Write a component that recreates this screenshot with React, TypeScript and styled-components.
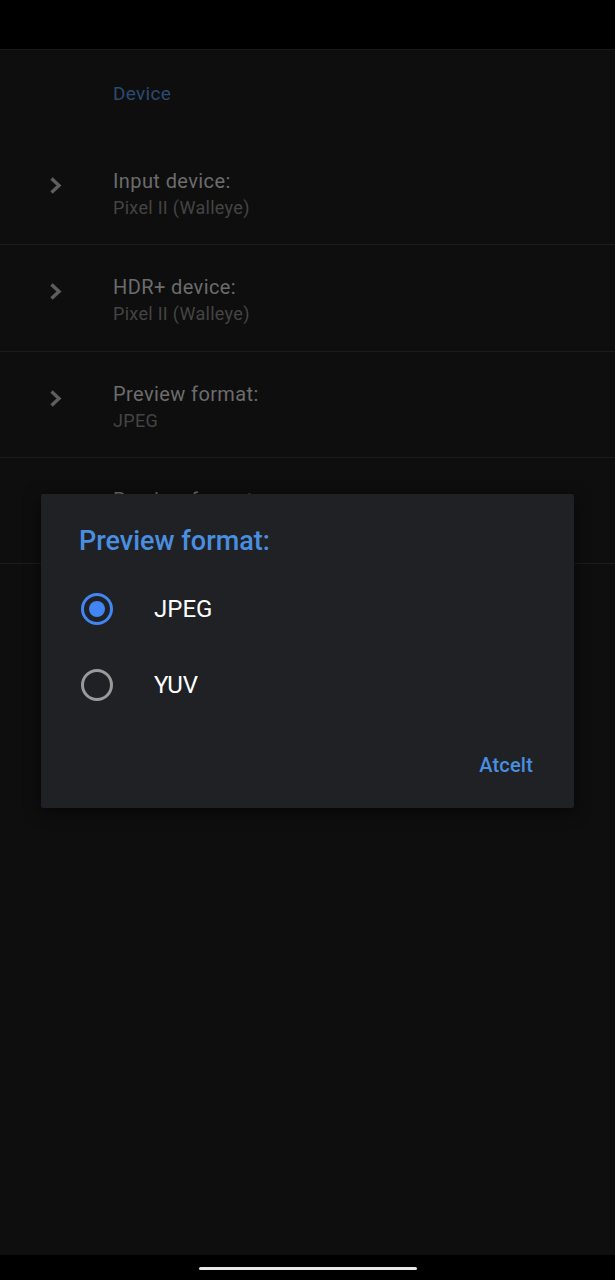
import React from "react";
import styled, { createGlobalStyle } from "styled-components";

const Global = createGlobalStyle`
  html, body { margin: 0; padding: 0; background: #0e0e0e; }
  body { font-family: Roboto, "Noto Sans", Arial, sans-serif; }
`;

const Screen = styled.div`
  position: relative;
  width: 615px;
  height: 1280px;
  background: #0e0e0e;
  display: flex;
  flex-direction: column;
  overflow: hidden;
`;

const StatusBar = styled.div`
  height: 49px;
  background: #000;
  border-bottom: 1px solid #1a1a1a;
  flex-shrink: 0;
`;

const Content = styled.div`
  flex: 1;
  display: flex;
  flex-direction: column;
`;

const SectionHeader = styled.div`
  height: 89px;
  box-sizing: border-box;
  padding: 33px 0 0 113px;
  color: #2b4a72;
  font-size: 19px;
  line-height: 22px;
  letter-spacing: 0.3px;
`;

const Row = styled.div<{ $tall?: boolean }>`
  height: ${(p) => (p.$tall ? 107 : 106)}px;
  box-sizing: border-box;
  border-bottom: 1px solid #1c1c1c;
  display: flex;
  align-items: flex-start;
  padding-top: 30px;
`;

const ChevronCell = styled.div`
  width: 113px;
  display: flex;
  padding-left: 49px;
  box-sizing: border-box;
  margin-top: 7px;
`;

const TextCol = styled.div`
  display: flex;
  flex-direction: column;
  gap: 4px;
`;

const RowTitle = styled.div`
  color: #6c6c6c;
  font-size: 20px;
  line-height: 24px;
  letter-spacing: 0.4px;
`;

const RowSub = styled.div`
  color: #444;
  font-size: 18px;
  line-height: 22px;
  letter-spacing: 0.3px;
`;

const NavBar = styled.div`
  height: 25px;
  background: #000;
  display: flex;
  justify-content: center;
  padding-top: 12px;
  box-sizing: border-box;
  flex-shrink: 0;
`;

const Pill = styled.div`
  width: 218px;
  height: 3px;
  border-radius: 2px;
  background: #e8e8e8;
`;

const Dialog = styled.div`
  position: absolute;
  left: 41px;
  top: 494px;
  width: 533px;
  height: 314px;
  background: #202124;
  border-radius: 2px;
  box-shadow: 0 4px 16px rgba(0, 0, 0, 0.6);
  box-sizing: border-box;
  padding: 29px 0 0 38px;
  display: flex;
  flex-direction: column;
`;

const DialogTitle = styled.div`
  color: #4a8ee0;
  font-size: 27px;
  font-weight: 500;
  line-height: 36px;
  margin-bottom: 12px;
`;

const Option = styled.div`
  height: 76px;
  display: flex;
  align-items: center;
  gap: 41px;
`;

const Radio = styled.div<{ $on?: boolean }>`
  width: 32px;
  height: 32px;
  border-radius: 50%;
  box-sizing: border-box;
  border: 3px solid ${(p) => (p.$on ? "#4285f4" : "#9a9a9a")};
  display: flex;
  align-items: center;
  justify-content: center;
  margin-left: 2px;
`;

const Dot = styled.div`
  width: 16px;
  height: 16px;
  border-radius: 50%;
  background: #4285f4;
`;

const OptionLabel = styled.div`
  color: #ffffff;
  font-size: 24px;
`;

const Actions = styled.div`
  display: flex;
  justify-content: flex-end;
  padding-right: 41px;
  margin-top: 30px;
`;

const ActionButton = styled.div`
  color: #4a8ee0;
  font-size: 20px;
  font-weight: 500;
  letter-spacing: 0.2px;
`;

const Chevron = () => (
  <svg width="15" height="19" viewBox="0 0 15 19">
    <path d="M2.5 2.5 L10 9.5 L2.5 16.5" fill="none" stroke="#5e5e5e" strokeWidth="3.4" />
  </svg>
);

const rows = [
  { title: "Input device:", sub: "Pixel II (Walleye)" },
  { title: "HDR+ device:", sub: "Pixel II (Walleye)" },
  { title: "Preview format:", sub: "JPEG" },
  { title: "Preview format:", sub: "JPEG" },
];

export default function App() {
  return (
    <>
      <Global />
      <Screen>
        <StatusBar />
        <Content>
          <SectionHeader>Device</SectionHeader>
          {rows.map((r, i) => (
            <Row key={i} $tall={i === 1}>
              <ChevronCell>
                <Chevron />
              </ChevronCell>
              <TextCol>
                <RowTitle>{r.title}</RowTitle>
                <RowSub>{r.sub}</RowSub>
              </TextCol>
            </Row>
          ))}
        </Content>
        <NavBar>
          <Pill />
        </NavBar>
        <Dialog>
          <DialogTitle>Preview format:</DialogTitle>
          <Option>
            <Radio $on>
              <Dot />
            </Radio>
            <OptionLabel>JPEG</OptionLabel>
          </Option>
          <Option>
            <Radio />
            <OptionLabel>YUV</OptionLabel>
          </Option>
          <Actions>
            <ActionButton>Atcelt</ActionButton>
          </Actions>
        </Dialog>
      </Screen>
    </>
  );
}
